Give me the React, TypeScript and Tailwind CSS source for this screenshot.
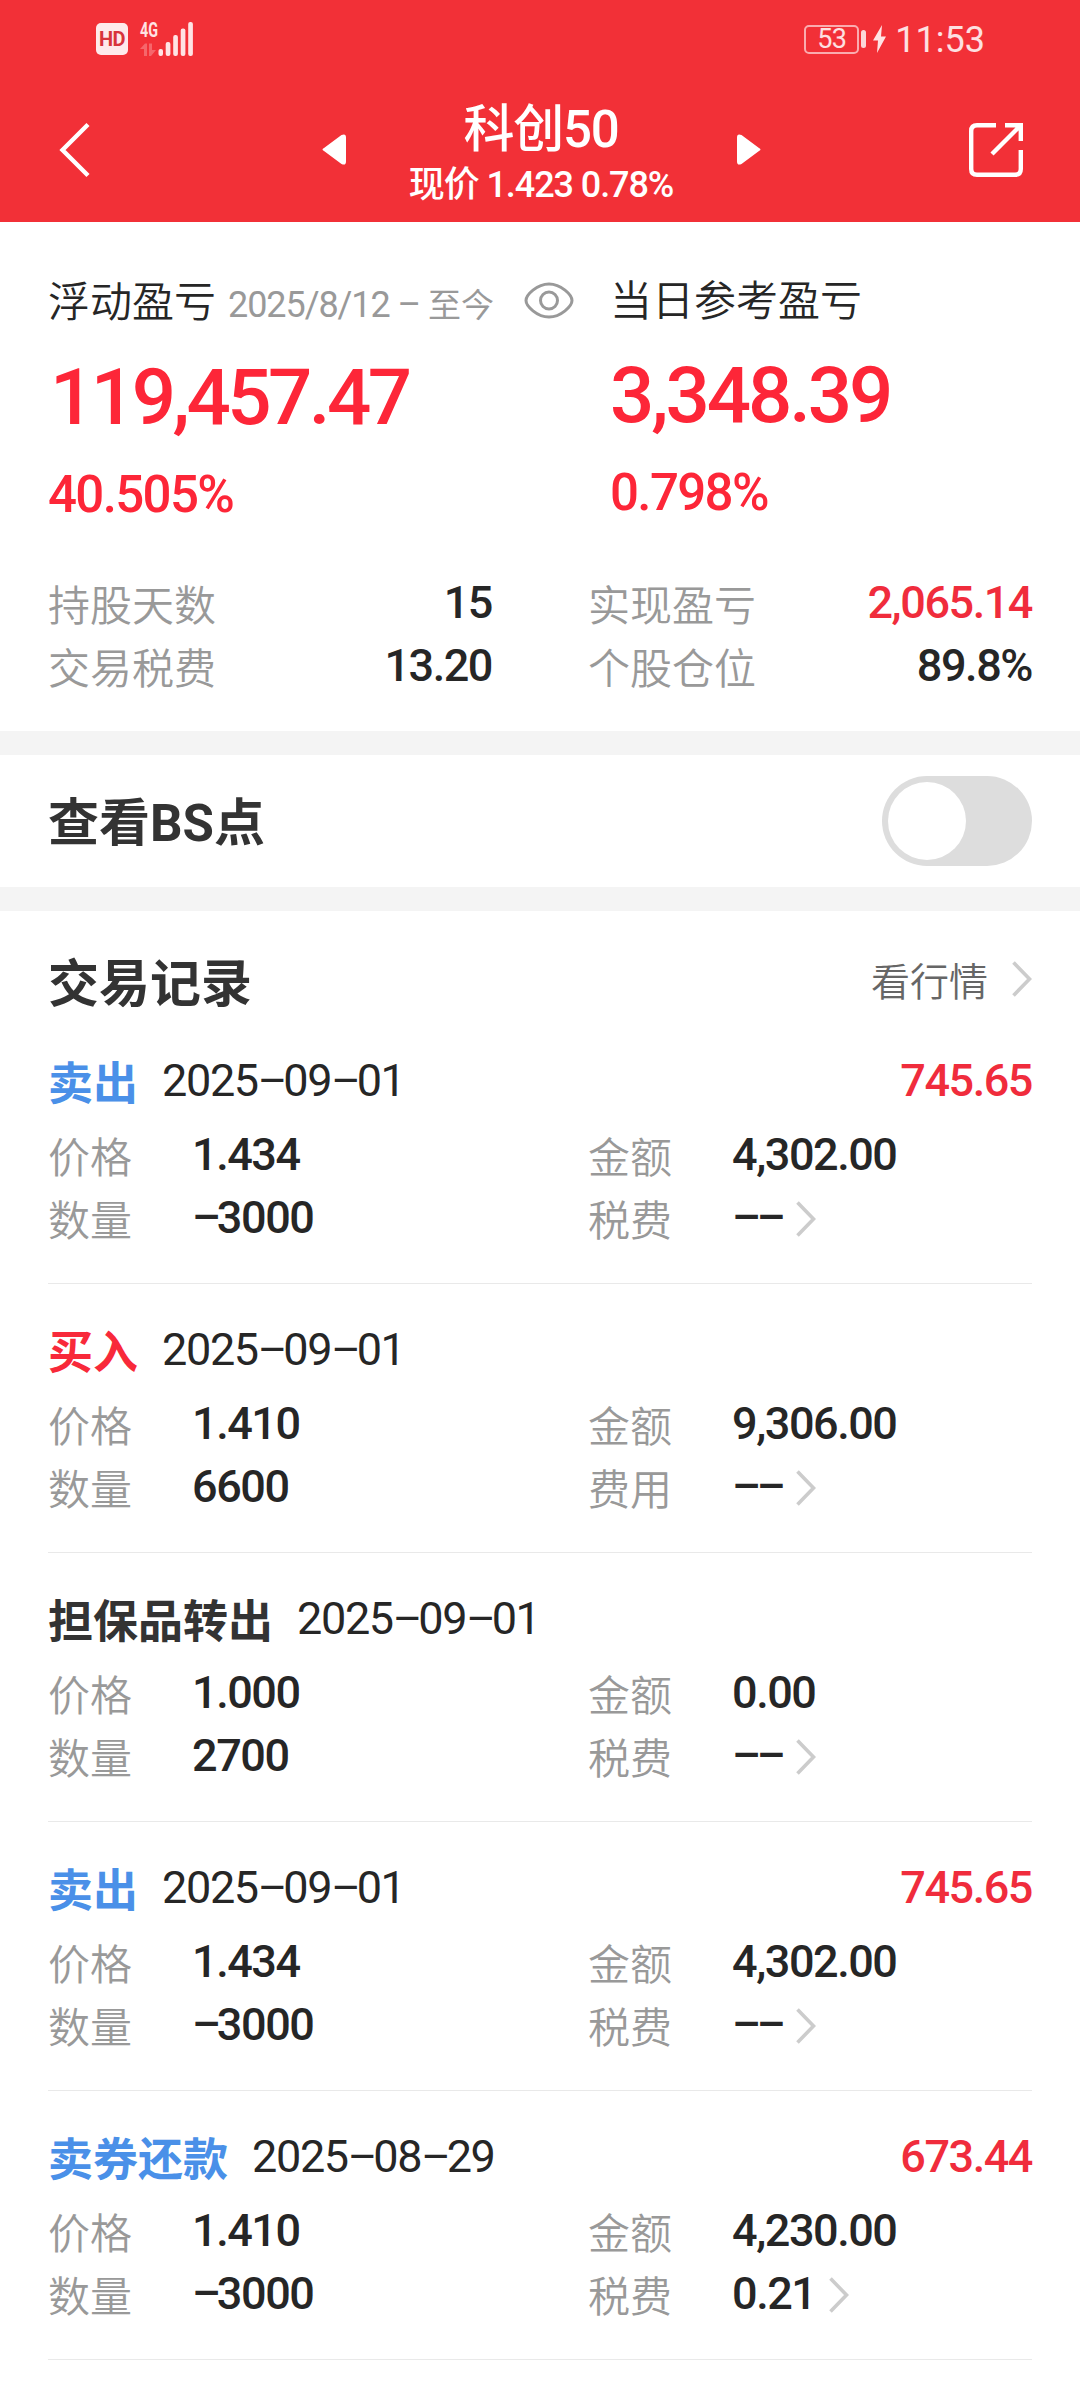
import { clsx } from 'clsx';

type TradeKind = 'sell' | 'buy' | 'transfer';

interface Trade {
    kind: TradeKind;
    action: string;
    date: string;
    profit?: string;
    price: string;
    amount: string;
    quantity: string;
    feeLabel: string;
    fee: string;
}

const trades: Trade[] = [
    {
        kind: 'sell',
        action: '卖出',
        date: '2025–09–01',
        profit: '745.65',
        price: '1.434',
        amount: '4,302.00',
        quantity: '–3000',
        feeLabel: '税费',
        fee: '––',
    },
    {
        kind: 'buy',
        action: '买入',
        date: '2025–09–01',
        price: '1.410',
        amount: '9,306.00',
        quantity: '6600',
        feeLabel: '费用',
        fee: '––',
    },
    {
        kind: 'transfer',
        action: '担保品转出',
        date: '2025–09–01',
        price: '1.000',
        amount: '0.00',
        quantity: '2700',
        feeLabel: '税费',
        fee: '––',
    },
    {
        kind: 'sell',
        action: '卖出',
        date: '2025–09–01',
        profit: '745.65',
        price: '1.434',
        amount: '4,302.00',
        quantity: '–3000',
        feeLabel: '税费',
        fee: '––',
    },
    {
        kind: 'sell',
        action: '卖券还款',
        date: '2025–08–29',
        profit: '673.44',
        price: '1.410',
        amount: '4,230.00',
        quantity: '–3000',
        feeLabel: '税费',
        fee: '0.21',
    },
];

// Dashes are set tighter than digits so that they take the same width
const Figures = ({ text }: { text: string }) => (
    <>
        {text.split(/(–)/).map((part, index) =>
            part === '–' ? (
                <span key={index} className="tracking-[-0.09em]">
                    {part}
                </span>
            ) : (
                part
            ),
        )}
    </>
);

const ChevronRight = ({ className }: { className?: string }) => (
    <svg width="20" height="36" viewBox="0 0 20 36" fill="none" className={className}>
        <path d="M1.5 1.5 L17.5 18 L1.5 34.5" stroke="#cccccc" strokeWidth="3.6" />
    </svg>
);

const StatusBar = () => (
    <div className="flex h-[78px] items-center justify-between pr-[95px] pl-24 text-white/85">
        <div className="flex items-center gap-3">
            <div className="flex size-8 items-center justify-center rounded-[5px] bg-white/90 text-[20px] leading-8 font-bold tracking-[-0.03em] text-[#d8343b]">
                HD
            </div>
            <svg width="53" height="34" viewBox="0 0 53 34" fill="#ffe3e4" className="overflow-visible">
                <text
                    x="0"
                    y="15"
                    fontFamily="Roboto, sans-serif"
                    fontSize="20"
                    fontWeight="700"
                    textLength="18"
                    lengthAdjust="spacingAndGlyphs"
                >
                    4G
                </text>
                <path d="M0 27 L5 21.5 H7 V34 H4 V27 Z M9 21.5 H12 V28 H16 L11 34 H9 Z" opacity="0.3" />
                <rect x="18.5" y="27" width="4.5" height="7" rx="2" />
                <rect x="25.7" y="20" width="4.7" height="14" rx="2" />
                <rect x="33.2" y="13" width="4.7" height="21" rx="2" />
                <rect x="40.7" y="6.5" width="4.7" height="27.5" rx="2" />
                <rect x="48.2" y="0" width="4.7" height="34" rx="2" />
            </svg>
        </div>
        <div className="flex items-center">
            <div className="flex h-[29px] w-[55px] items-center justify-center rounded-[5px] border-2 border-white/60 text-[27px] leading-none tracking-[-0.02em]">
                53
            </div>
            <div className="ml-0.5 h-[18px] w-[5px] rounded-sm bg-white/80" />
            <svg width="13" height="28" viewBox="0 0 13 28" className="ml-[7px]" fill="#ffe3e4">
                <path d="M9 0 L0 15.5 H5 L4 28 L13 11.5 H8 Z" />
            </svg>
            <span className="mt-0.5 ml-[9px] text-[36px] leading-none">11:53</span>
        </div>
    </div>
);

const NavBar = () => (
    <div className="flex h-36 items-start justify-between pr-[57px] pl-[59px] text-white">
        <svg width="54" height="56" viewBox="0 0 54 56" className="mt-11" fill="none">
            <path d="M29 2.5 L3.5 28 L29 53.5" stroke="currentColor" strokeWidth="4.4" />
        </svg>
        <div className="flex items-start">
            <svg width="24" height="31" viewBox="0 0 24 31" className="mt-14" fill="currentColor">
                <path d="M2 14 L19.5 1 Q24 -1 24 3.5 V27.5 Q24 32 19.5 30 L2 17 Q-1 15.5 2 14 Z" />
            </svg>
            <div className="flex w-[391px] flex-col items-center">
                <h1 className="mt-[22px] text-[51px] leading-[60px] font-medium tracking-[-0.025em]">科创50</h1>
                <p className="text-[36px] leading-[50px] font-medium tracking-[-0.03em]">现价 1.423 0.78%</p>
            </div>
            <svg width="24" height="31" viewBox="0 0 24 31" className="mt-14" fill="currentColor">
                <path d="M22 14 L4.5 1 Q0 -1 0 3.5 V27.5 Q0 32 4.5 30 L22 17 Q25 15.5 22 14 Z" />
            </svg>
        </div>
        <svg width="54" height="54" viewBox="0 0 54 54" className="mt-[45px]" fill="none" stroke="currentColor" strokeWidth="4.4">
            <path d="M27 2.2 H8 Q2.2 2.2 2.2 8 V46 Q2.2 51.8 8 51.8 H46 Q51.8 51.8 51.8 46 V27" />
            <path d="M36 2.2 H51.8 V18 M51 3 L23 31" />
        </svg>
    </div>
);

const EyeIcon = () => (
    <svg width="50" height="37" viewBox="0 0 50 37" fill="none" stroke="#999999" strokeWidth="3">
        <path d="M2 18.5 C2 13 13 2 25 2 S48 13 48 18.5 S37 35 25 35 S2 24 2 18.5 Z" />
        <circle cx="25" cy="18.5" r="8.5" />
    </svg>
);

interface StatProps {
    label: string;
    value: string;
    red?: boolean;
}

const Stat = ({ label, value, red }: StatProps) => (
    <div className="flex h-[63px] items-start justify-between leading-[63px]">
        <span className="mt-1 text-[42px] font-[350] text-[#999999]">{label}</span>
        <span
            className={clsx(
                'text-[45px] font-medium tracking-[-0.032em]',
                red ? 'text-[#f02c3c]' : 'text-[#262626]',
            )}
        >
            {value}
        </span>
    </div>
);

const Summary = () => (
    <section className="h-[509px] px-12 pt-[49px]">
        <div className="flex h-[300px] items-start">
            <div className="w-[562px] text-[#fd2638]">
                <div className="flex h-[62px] items-center">
                    <span className="flex items-baseline">
                        <span className="text-[42px] font-[350] text-[#262626]">浮动盈亏</span>
                        <span className="ml-3 text-[36px] tracking-[-0.03em] text-[#999999]">2025/8/12 –</span>
                        <span className="ml-2 text-[33px] text-[#999999]">至今</span>
                    </span>
                    <span className="mb-1 ml-[30px]">
                        <EyeIcon />
                    </span>
                </div>
                <p className="mt-[25px] ml-0.5 text-[78px] leading-[80px] font-medium tracking-[-0.045em]">119,457.47</p>
                <p className="mt-[27px] text-[51px] leading-[60px] font-medium tracking-[-0.032em]">40.505%</p>
            </div>
            <div className="text-[#fd2638]">
                <p className="text-[42px] leading-[62px] font-[350] text-[#262626]">当日参考盈亏</p>
                <p className="mt-[23px] text-[78px] leading-[80px] font-medium tracking-[-0.04em]">3,348.39</p>
                <p className="mt-[27px] text-[51px] leading-[60px] font-medium tracking-[-0.032em]">0.798%</p>
            </div>
        </div>
        <div className="grid grid-cols-2 gap-x-24">
            <Stat label="持股天数" value="15" />
            <Stat label="实现盈亏" value="2,065.14" red />
            <Stat label="交易税费" value="13.20" />
            <Stat label="个股仓位" value="89.8%" />
        </div>
    </section>
);

interface FieldProps {
    label: string;
    value: string;
    arrow?: boolean;
}

const Field = ({ label, value, arrow }: FieldProps) => (
    <div className="flex h-[63px] items-start leading-[63px]">
        <span className="mt-1 w-36 text-[42px] font-[350] text-[#999999]">{label}</span>
        <span className="text-[45px] font-medium tracking-[-0.032em] text-[#262626]">
            <Figures text={value} />
        </span>
        {arrow && <ChevronRight className="mt-[15px] ml-3.5" />}
    </div>
);

const actionColors: Record<TradeKind, string> = {
    sell: 'text-[#4a90e8]',
    buy: 'text-[#f8293a]',
    transfer: 'text-[#333333]',
};

const TradeItem = ({ trade }: { trade: Trade }) => (
    <li className="h-[269px] border-b border-[#e9e9e9] pt-[34px]">
        <div className="flex h-[63px] items-start leading-[63px]">
            <span className={clsx('mt-1 text-[45px] font-bold', actionColors[trade.kind])}>{trade.action}</span>
            <span className="ml-6 text-[45px] tracking-[-0.03em] text-[#262626]">
                <Figures text={trade.date} />
            </span>
            {trade.profit && (
                <span className="ml-auto text-[45px] font-medium tracking-[-0.032em] text-[#f02c3c]">
                    {trade.profit}
                </span>
            )}
        </div>
        <div className="mt-[11px] grid grid-cols-2 gap-x-24">
            <Field label="价格" value={trade.price} />
            <Field label="金额" value={trade.amount} />
            <Field label="数量" value={trade.quantity} />
            <Field label={trade.feeLabel} value={trade.fee} arrow />
        </div>
    </li>
);

export default function App() {
    return (
        <div className="h-[2400px] w-[1080px] overflow-hidden bg-white font-[Roboto,'Noto_Sans_CJK_SC',sans-serif]">
            <header className="h-[222px] bg-[#f23037]">
                <StatusBar />
                <NavBar />
            </header>

            <Summary />

            <section className="flex h-[180px] items-center justify-between border-y-[24px] border-[#f4f4f4] px-12">
                <h2 className="pt-[7px] text-[51px] font-bold text-[#333333]">查看BS点</h2>
                <button type="button" className="h-[90px] w-[150px] rounded-full bg-[#dddddd] p-1.5">
                    <span className="block size-[78px] rounded-full bg-white" />
                </button>
            </section>

            <section className="px-12">
                <div className="flex h-[104px] items-start justify-between">
                    <h2 className="mt-11 text-[51px] leading-[60px] font-bold text-[#333333]">交易记录</h2>
                    <a className="mt-[50px] flex items-start text-[39px] leading-[44px] font-[350] text-[#666666]">
                        看行情
                        <ChevronRight className="ml-6" />
                    </a>
                </div>
                <ul>
                    {trades.map((trade, index) => (
                        <TradeItem key={index} trade={trade} />
                    ))}
                </ul>
            </section>
        </div>
    );
}
